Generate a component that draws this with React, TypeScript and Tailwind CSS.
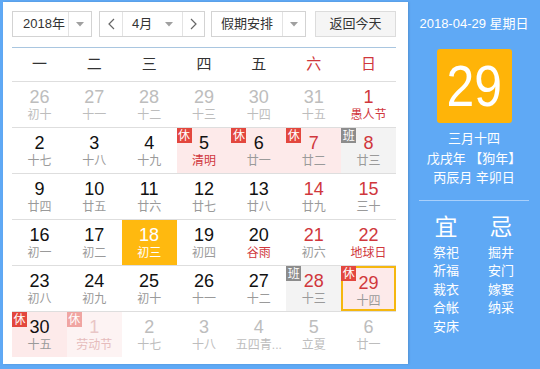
import React from 'react'

type Cell = {
  d: string
  l: string
  other?: boolean
  redNum?: boolean
  redLunar?: boolean
  badge?: '休' | '班'
  sel?: boolean
  today?: boolean
}

const rows: Cell[][] = [
  [
    { d: '26', l: '初十', other: true },
    { d: '27', l: '十一', other: true },
    { d: '28', l: '十二', other: true },
    { d: '29', l: '十三', other: true },
    { d: '30', l: '十四', other: true },
    { d: '31', l: '十五', other: true },
    { d: '1', l: '愚人节', redNum: true, redLunar: true },
  ],
  [
    { d: '2', l: '十七' },
    { d: '3', l: '十八' },
    { d: '4', l: '十九' },
    { d: '5', l: '清明', badge: '休', redLunar: true },
    { d: '6', l: '廿一', badge: '休' },
    { d: '7', l: '廿二', badge: '休', redNum: true },
    { d: '8', l: '廿三', badge: '班', redNum: true },
  ],
  [
    { d: '9', l: '廿四' },
    { d: '10', l: '廿五' },
    { d: '11', l: '廿六' },
    { d: '12', l: '廿七' },
    { d: '13', l: '廿八' },
    { d: '14', l: '廿九', redNum: true },
    { d: '15', l: '三十', redNum: true },
  ],
  [
    { d: '16', l: '初一' },
    { d: '17', l: '初二' },
    { d: '18', l: '初三', sel: true },
    { d: '19', l: '初四' },
    { d: '20', l: '谷雨', redLunar: true },
    { d: '21', l: '初六', redNum: true },
    { d: '22', l: '地球日', redNum: true, redLunar: true },
  ],
  [
    { d: '23', l: '初八' },
    { d: '24', l: '初九' },
    { d: '25', l: '初十' },
    { d: '26', l: '十一' },
    { d: '27', l: '十二' },
    { d: '28', l: '十三', badge: '班', redNum: true },
    { d: '29', l: '十四', badge: '休', redNum: true, today: true },
  ],
  [
    { d: '30', l: '十五', badge: '休' },
    { d: '1', l: '劳动节', badge: '休', other: true },
    { d: '2', l: '十七', other: true },
    { d: '3', l: '十八', other: true },
    { d: '4', l: '五四青...', other: true },
    { d: '5', l: '立夏', other: true },
    { d: '6', l: '廿一', other: true },
  ],
]

const Caret = () => (
  <svg width="8" height="5" viewBox="0 0 8 5">
    <path d="M0 0 L8 0 L4 4.5 Z" fill="#a0a0a0" />
  </svg>
)

function DayCell({ c }: { c: Cell }) {
  let bg = ''
  if (c.sel) bg = 'bg-[#ffb90f]'
  else if (c.badge === '休') bg = c.other ? 'bg-[#fdf3f3]' : 'bg-[#fdeaea]'
  else if (c.badge === '班') bg = 'bg-[#f3f3f3]'

  let numColor = 'text-[#111]'
  if (c.sel) numColor = 'text-white'
  else if (c.other && c.badge) numColor = 'text-[#e9c6c6]'
  else if (c.other) numColor = 'text-[#bdbdbd]'
  else if (c.redNum) numColor = 'text-[#d0373c]'

  let lunarColor = 'text-[#9a9a9a]'
  if (c.sel) lunarColor = 'text-white'
  else if (c.other && c.badge) lunarColor = 'text-[#e6bcbc]'
  else if (c.other) lunarColor = 'text-[#bdbdbd]'
  else if (c.redLunar) lunarColor = 'text-[#d0373c]'

  return (
    <div className={`relative h-[45px] flex flex-col items-center pt-[5px] ${bg} ${c.today ? 'border-2 border-[#f5b70f] pt-[3px]' : ''}`}>
      {c.badge && (
        <span
          className={`absolute ${c.today ? '-left-[2px] -top-[2px]' : 'left-0 top-0'} w-[15px] h-[15px] flex items-center justify-center text-[12px] leading-none text-white ${
            c.badge === '班' ? 'bg-[#8c8c8c]' : c.other ? 'bg-[#f0a5a2]' : 'bg-[#e3473e]'
          }`}
        >
          {c.badge}
        </span>
      )}
      <span className={`text-[18px] leading-[20px] ${numColor}`}>{c.d}</span>
      <span className={`text-[12px] leading-[16px] whitespace-nowrap ${lunarColor}`}>{c.l}</span>
    </div>
  )
}

export default function App() {
  const weekdays = ['一', '二', '三', '四', '五', '六', '日']
  return (
    <div
      className="w-[540px] h-[369px] bg-[#5fa9f5] flex pt-[2px] pl-[3px] pb-[5px] overflow-hidden"
      style={{ fontFamily: '"Liberation Sans", "Noto Sans CJK SC", sans-serif' }}
    >
      <div className="w-[405px] h-full bg-white pl-[9px] pr-[12px] pt-[9px] shadow-[1px_0_2px_rgba(0,0,0,0.15)]">
        {/* top bar */}
        <div className="flex h-[26px] text-[13px] text-[#333]">
          <div className="w-[80px] flex border border-[#d3d3d3]">
            <div className="w-[55px] flex items-center pl-[10px]">2018年</div>
            <div className="flex-1 border-l border-[#e3e3e3] flex items-center justify-center">
              <Caret />
            </div>
          </div>
          <div className="ml-[7px] w-[106px] flex border border-[#d3d3d3]">
            <div className="w-[23px] flex items-center justify-center border-r border-[#e3e3e3]">
              <svg width="7" height="12" viewBox="0 0 7 12">
                <path d="M6 1 L1 6 L6 11" stroke="#666" strokeWidth="1.2" fill="none" />
              </svg>
            </div>
            <div className="w-[59px] flex items-center pl-[9px] gap-[13px]">
              <span>4月</span>
              <Caret />
            </div>
            <div className="flex-1 flex items-center justify-center border-l border-[#e3e3e3]">
              <svg width="7" height="12" viewBox="0 0 7 12">
                <path d="M1 1 L6 6 L1 11" stroke="#666" strokeWidth="1.2" fill="none" />
              </svg>
            </div>
          </div>
          <div className="ml-[6px] w-[95px] flex border border-[#d3d3d3]">
            <div className="w-[70px] flex items-center justify-center">假期安排</div>
            <div className="flex-1 border-l border-[#e3e3e3] flex items-center justify-center">
              <Caret />
            </div>
          </div>
          <div className="ml-[9px] w-[81px] flex items-center justify-center border border-[#dcdcdc] bg-[#f5f5f5]">
            返回今天
          </div>
        </div>

        <div className="mt-[10px] h-px bg-[#a9c6e0]" />

        {/* weekday header */}
        <div className="grid grid-cols-7 h-[34px] border-b border-[#dedede] items-center text-[15px]">
          {weekdays.map((w, i) => (
            <div key={w} className={`text-center ${i >= 5 ? 'text-[#d0373c]' : 'text-[#333]'}`}>
              {w}
            </div>
          ))}
        </div>

        {rows.map((r, ri) => (
          <div
            key={ri}
            className={`grid grid-cols-7 ${ri < rows.length - 1 ? 'border-b border-[#dedede]' : ''}`}
          >
            {r.map((c, ci) => (
              <DayCell key={ci} c={c} />
            ))}
          </div>
        ))}
      </div>

      {/* right panel */}
      <div className="flex-1 flex flex-col items-center text-white">
        <div className="mt-[13px] text-[13px] leading-[18px]">2018-04-29 星期日</div>
        <div className="mt-[16px] w-[75px] h-[74px] rounded-[3px] bg-[#ffb408] flex items-center justify-center">
          <span className="text-[58px] leading-none scale-x-[0.86]">29</span>
        </div>
        <div className="mt-[6px] text-[13px] leading-[19.5px] text-center">
          <div>三月十四</div>
          <div>戊戌年 【狗年】</div>
          <div>丙辰月 辛卯日</div>
        </div>
        <div className="mt-[12px] w-[110px] h-px bg-[#a9d0fb]" />
        <div className="mt-[12px] w-[110px] flex">
          <div className="w-[54px] flex flex-col items-center">
            <div className="text-[23px] leading-[28px]">宜</div>
            <div className="mt-[3px] text-[13px] leading-[18.5px]">
              <div>祭祀</div>
              <div>祈福</div>
              <div>裁衣</div>
              <div>合帐</div>
              <div>安床</div>
            </div>
          </div>
          <div className="w-[56px] flex flex-col items-center">
            <div className="text-[23px] leading-[28px]">忌</div>
            <div className="mt-[3px] text-[13px] leading-[18.5px]">
              <div>掘井</div>
              <div>安门</div>
              <div>嫁娶</div>
              <div>纳采</div>
            </div>
          </div>
        </div>
      </div>
    </div>
  )
}
